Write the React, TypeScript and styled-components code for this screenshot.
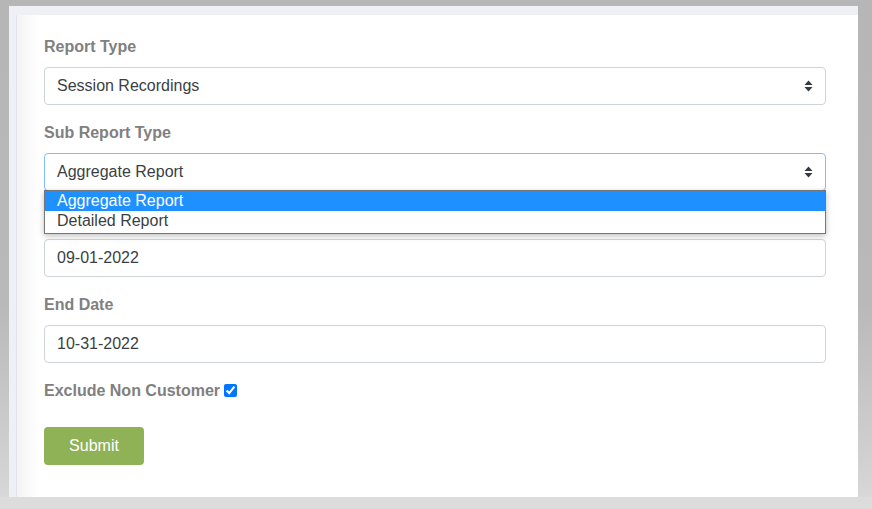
import React from "react";
import styled, { createGlobalStyle } from "styled-components";

const Global = createGlobalStyle`
  html, body { margin: 0; padding: 0; }
  body {
    width: 872px;
    height: 509px;
    overflow: hidden;
    font-family: "Liberation Sans", Arial, sans-serif;
    background: linear-gradient(to bottom, #b5b6b5 0%, #b8b9b8 60%, #d4d4d4 95%, #dcdcdc 100%);
  }
`;

const Page = styled.div`
  position: relative;
  width: 872px;
  height: 509px;
  padding: 6px 0 0 9px;
  box-sizing: border-box;
  &::after {
    content: "";
    position: absolute;
    left: 0;
    right: 0;
    bottom: 0;
    height: 12px;
    background: #dcdcdc;
  }
`;

const Panel = styled.div`
  width: 849px;
  height: 491px;
  background: #eef0f5;
  padding: 9px 0 0 7px;
  box-sizing: border-box;
  display: flex;
`;

const Card = styled.div`
  flex: 1;
  background: linear-gradient(to right, #f3f3f3 0px, #ffffff 22px);
  border-left: 1px solid #e3e5ea;
  padding: 21px 32px 0 27px;
  box-sizing: border-box;
  display: flex;
  flex-direction: column;
`;

const Field = styled.div`
  position: relative;
  display: flex;
  flex-direction: column;
  margin-bottom: 17px;
`;

const Label = styled.label<{ $inline?: boolean }>`
  font-size: 16px;
  line-height: 21px;
  font-weight: bold;
  color: #808080;
  margin-bottom: ${(p) => (p.$inline ? "0" : "10px")};
  display: flex;
  align-items: center;
  gap: 4px;
`;

const Box = styled.div<{ $focus?: boolean }>`
  height: 38px;
  box-sizing: border-box;
  border: 1px solid ${(p) => (p.$focus ? "#80bdff" : "#ced4da")};
  border-radius: 4px;
  padding: 0 12px;
  display: flex;
  align-items: center;
  justify-content: space-between;
  font-size: 16px;
  color: #3a3f44;
  background: #fff;
`;

const Arrows = () => (
  <svg width="9" height="12" viewBox="0 0 9 12">
    <path d="M4.5 0.5 L8.5 5 H0.5 Z" fill="#343a40" />
    <path d="M4.5 11.5 L8.5 7 H0.5 Z" fill="#343a40" />
  </svg>
);

const Dropdown = styled.ul`
  position: absolute;
  top: 68px;
  left: 0;
  right: 0;
  margin: 0;
  padding: 0 0 2px 0;
  list-style: none;
  background: #fff;
  border: 1px solid #767676;
  box-shadow: 0 2px 6px rgba(0, 0, 0, 0.25);
  z-index: 5;
`;

const Option = styled.li<{ $active?: boolean }>`
  height: 20px;
  line-height: 20px;
  padding-left: 12px;
  font-size: 16px;
  color: ${(p) => (p.$active ? "#ffffff" : "#3a3f44")};
  background: ${(p) => (p.$active ? "#1e90ff" : "#ffffff")};
`;

const Check = styled.input`
  width: 13px;
  height: 13px;
  margin: 0;
  accent-color: #0075ff;
`;

const Submit = styled.button`
  margin-top: 9px;
  width: 100px;
  height: 38px;
  border: none;
  border-radius: 4px;
  background: #90b257;
  color: #fff;
  font-family: "Liberation Sans", Arial, sans-serif;
  font-size: 16px;
  align-self: flex-start;
`;

export default function App() {
  return (
    <>
      <Global />
      <Page>
        <Panel>
          <Card>
            <Field>
              <Label>Report Type</Label>
              <Box>
                <span>Session Recordings</span>
                <Arrows />
              </Box>
            </Field>
            <Field>
              <Label>Sub Report Type</Label>
              <Box $focus>
                <span>Aggregate Report</span>
                <Arrows />
              </Box>
              <Dropdown>
                <Option $active>Aggregate Report</Option>
                <Option>Detailed Report</Option>
              </Dropdown>
            </Field>
            <Field>
              <Label>Start Date</Label>
              <Box>
                <span>09-01-2022</span>
              </Box>
            </Field>
            <Field>
              <Label>End Date</Label>
              <Box>
                <span>10-31-2022</span>
              </Box>
            </Field>
            <Field>
              <Label $inline>
                Exclude Non Customer <Check type="checkbox" defaultChecked />
              </Label>
            </Field>
            <Submit>Submit</Submit>
          </Card>
        </Panel>
      </Page>
    </>
  );
}
